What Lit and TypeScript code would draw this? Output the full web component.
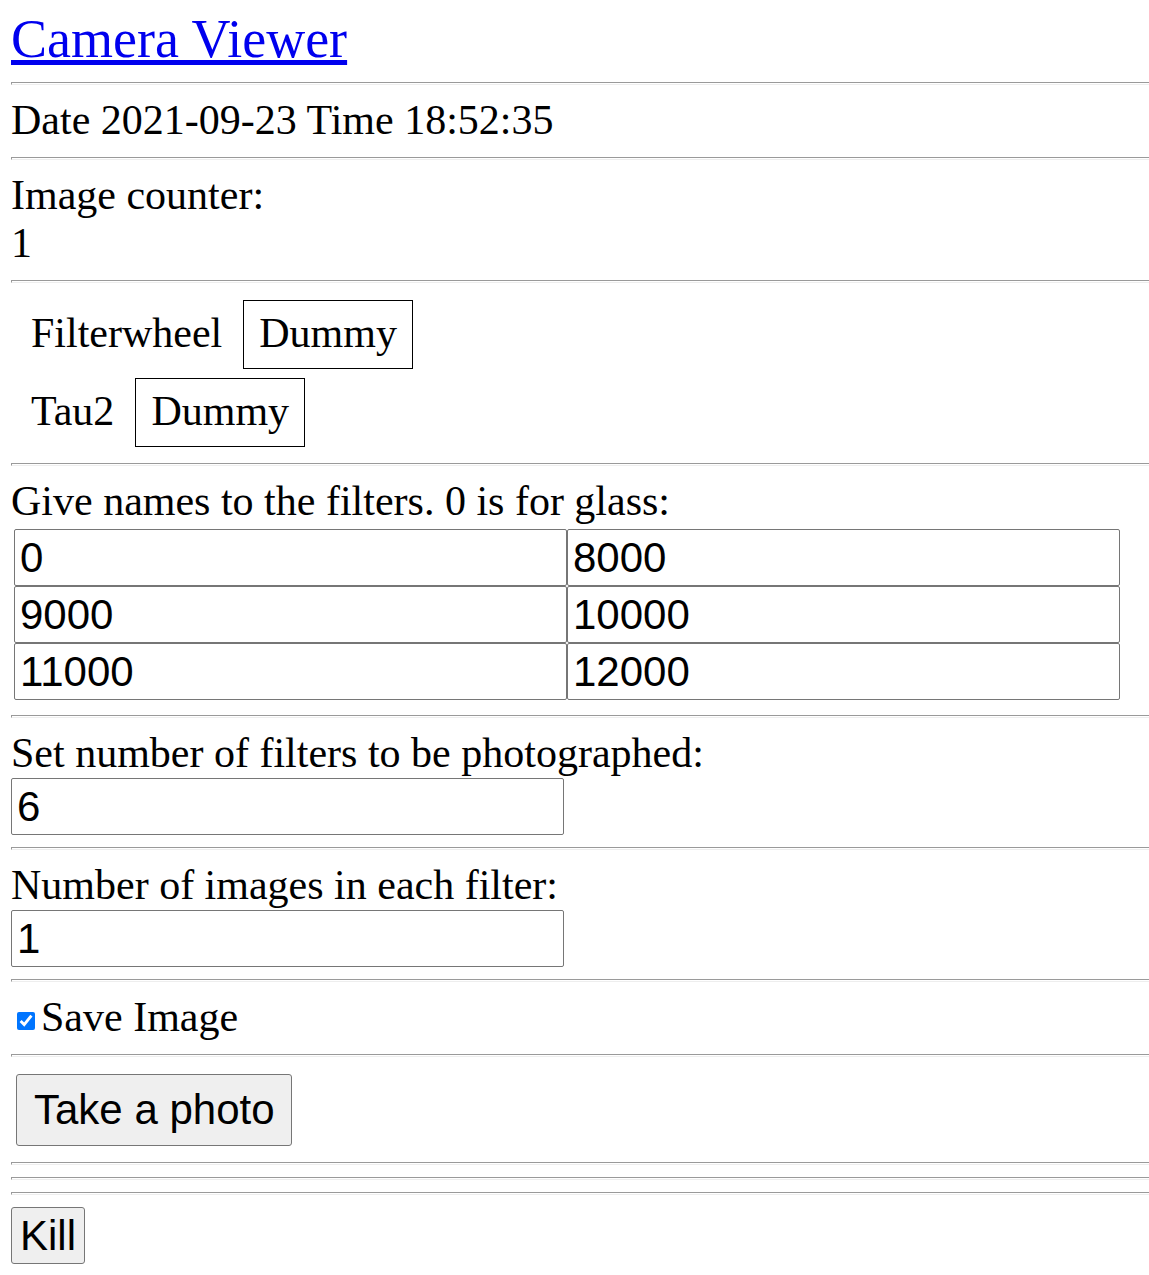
import { LitElement, html, css } from "lit";
import { customElement, state } from "lit/decorators.js";

@customElement("app-root")
export class AppRoot extends LitElement {
  static styles = css`
    :host {
      display: block;
      padding: 11px 0 11px 11px;
      background: #fff;
      color: #000;
      font-family: "Liberation Serif", "Times New Roman", serif;
      font-size: 42px;
      line-height: 46px;
    }
    * {
      box-sizing: border-box;
    }
    .title {
      display: block;
      width: fit-content;
      padding-bottom: 2px;
      font-size: 54px;
      line-height: 57px;
      color: #0000ee;
    }
    hr {
      height: 3px;
      margin: 12px 0;
      border: 1px solid #9a9a9a;
      border-right: 0;
      border-bottom-color: #eee;
    }
    .line {
      display: block;
      padding-bottom: 2px;
    }
    .devices {
      display: grid;
      gap: 9px;
      padding: 5px 0 4px 20px;
    }
    .device {
      display: flex;
      align-items: baseline;
      gap: 21px;
    }
    .mode {
      padding: 9px 15px 12px;
      border: 1px solid #000;
    }
    .filters {
      display: grid;
      grid-template-columns: repeat(2, minmax(0, 553px));
      padding: 3px;
    }
    input[type="text"],
    button {
      font-family: "Liberation Sans", Arial, sans-serif;
      font-size: 42px;
      color: #000;
      border: 1px solid #767676;
    }
    input[type="text"] {
      display: block;
      width: 100%;
      max-width: 553px;
      height: 57px;
      margin: 0;
      padding: 0 5px;
      background: #fff;
      border-radius: 2px;
    }
    .save {
      display: flex;
      align-items: center;
      width: fit-content;
    }
    .save input {
      width: 18px;
      height: 18px;
      margin: 8px 6px 0;
    }
    button {
      display: block;
      background: #efefef;
      border-radius: 3px;
      height: 57px;
      padding: 0 8px;
    }
    .photo {
      height: 72px;
      margin: 17px 5px 16px;
      padding: 0 16px 0 17px;
    }
  `;

  @state() private filters = ["0", "8000", "9000", "10000", "11000", "12000"];

  private devices = [
    { name: "Filterwheel", mode: "Dummy" },
    { name: "Tau2", mode: "Dummy" },
  ];

  render() {
    return html`
      <a class="title" href="#">Camera Viewer</a>
      <hr />
      <div class="line">Date 2021-09-23 Time 18:52:35</div>
      <hr />
      <div class="line">Image counter:</div>
      <div class="line">1</div>
      <hr />
      <div class="devices">
        ${this.devices.map(
          (d) => html`<div class="device"><span>${d.name}</span><span class="mode">${d.mode}</span></div>`
        )}
      </div>
      <hr />
      <div class="line" id="filter-names">Give names to the filters. 0 is for glass:</div>
      <div class="filters" role="group" aria-labelledby="filter-names">
        ${this.filters.map(
          (name) => html`<input type="text" aria-labelledby="filter-names" .value=${name} />`
        )}
      </div>
      <hr />
      <label class="line" for="filter-count">Set number of filters to be photographed:</label>
      <input id="filter-count" type="text" value="6" />
      <hr />
      <label class="line" for="image-count">Number of images in each filter:</label>
      <input id="image-count" type="text" value="1" />
      <hr />
      <label class="line save"><input type="checkbox" checked />Save Image</label>
      <hr />
      <button class="photo" type="button">Take a photo</button>
      <hr />
      <hr />
      <hr />
      <button type="button">Kill</button>
    `;
  }
}
